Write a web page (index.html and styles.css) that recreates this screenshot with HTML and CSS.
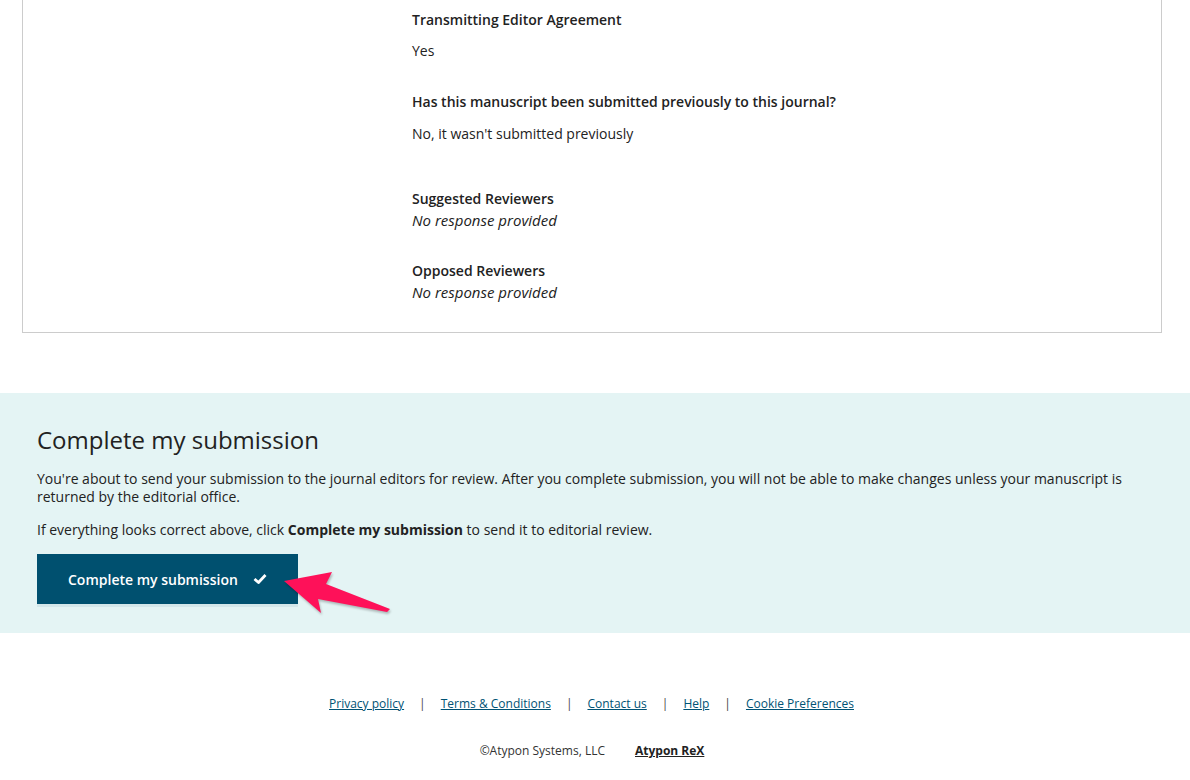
FILE: index.html
```html
<html lang="en">
<head>
    <meta charset="UTF-8">
    <meta name="viewport" content="width=device-width, initial-scale=1.0">
    <title>Review submission</title>
    <link rel="stylesheet" href="styles.css">
</head>
<body>
    <div class="review-card">
        <div class="side"></div>
        <div class="fields">
            <div class="field">
                <div class="label">Transmitting Editor Agreement</div>
                <div class="value">Yes</div>
            </div>
            <div class="field">
                <div class="label">Has this manuscript been submitted previously to this journal?</div>
                <div class="value">No, it wasn't submitted previously</div>
            </div>
            <div class="field tight">
                <div class="label">Suggested Reviewers</div>
                <div class="value empty">No response provided</div>
            </div>
            <div class="field tight">
                <div class="label">Opposed Reviewers</div>
                <div class="value empty">No response provided</div>
            </div>
        </div>
    </div>

    <div class="complete-band">
        <h2 class="complete-title">Complete my submission</h2>
        <p class="complete-text">You're about to send your submission to the journal editors for review. After you complete submission, you will not be able to make changes unless your manuscript is returned by the editorial office.</p>
        <p class="complete-text">If everything looks correct above, click <strong>Complete my submission</strong> to send it to editorial review.</p>
        <div class="button-wrap">
            <button class="complete-btn">
                Complete my submission
                <svg class="check" width="14" height="12" viewBox="0 0 14 12">
                    <path d="M1.5 6 L5.5 9.5 L12.5 2" fill="none" stroke="#fff" stroke-width="2.8" stroke-linejoin="round"/>
                </svg>
            </button>
            <svg class="pointer" width="110" height="46" viewBox="0 0 110 46">
                <polygon points="1,19 49,10 43,22 107,47 104,50 35,37 38,51" transform="translate(0,-4)" fill="#fe1159"/>
            </svg>
        </div>
    </div>

    <footer class="footer">
        <nav class="footer-links">
            <a href="#">Privacy policy</a>
            <span class="sep">|</span>
            <a href="#">Terms &amp; Conditions</a>
            <span class="sep">|</span>
            <a href="#">Contact us</a>
            <span class="sep">|</span>
            <a href="#">Help</a>
            <span class="sep">|</span>
            <a href="#">Cookie Preferences</a>
        </nav>
        <div class="copyright">
            <span>&copy;Atypon Systems, LLC</span>
            <a href="#" class="brand">Atypon ReX</a>
        </div>
    </footer>
</body>
</html>
```

FILE: styles.css
```css
body {
    margin: 0;
    font-family: "Open Sans", Arial, sans-serif;
    color: #222222;
    background-color: #ffffff;
}
.review-card {
    display: grid;
    grid-template-columns: 389px 1fr;
    margin-left: 22px;
    width: 1138px;
    border: 1px solid #cccccc;
    border-top: none;
    padding-bottom: 30px;
}
.fields {
    padding-top: 10px;
}
.field {
    margin-bottom: 31px;
}
.field:nth-child(2) {
    margin-bottom: 45px;
}
.field:last-child {
    margin-bottom: 0;
}
.label {
    font-size: 14px;
    font-weight: 600;
    line-height: 20px;
    margin-bottom: 11px;
}
.field:nth-child(2) .label {
    margin-bottom: 12px;
}
.value {
    font-size: 14px;
    line-height: 20px;
}
.field.tight .label {
    margin-bottom: 1px;
}
.value.empty {
    font-style: italic;
    font-size: 15px;
}
.complete-band {
    margin-top: 60px;
    background-color: #e4f4f4;
    padding: 31px 37px 26px;
}
.complete-title {
    margin: 0 0 14px;
    font-size: 24px;
    font-weight: 400;
    line-height: 32px;
}
.complete-text {
    margin: 0 0 15px;
    font-size: 14px;
    line-height: 18px;
}
.complete-text strong {
    font-weight: 700;
}
.button-wrap {
    position: relative;
    height: 53px;
}
.complete-btn {
    display: flex;
    align-items: center;
    gap: 15px;
    height: 50px;
    width: 261px;
    padding: 0 0 0 31px;
    border: none;
    background-color: #00506f;
    color: #ffffff;
    font-family: "Open Sans", Arial, sans-serif;
    font-size: 14px;
    font-weight: 600;
    box-shadow: 0 3px 0 #d3e7ea;
    cursor: pointer;
}
.check {
    margin-top: -1px;
}
.pointer {
    position: absolute;
    left: 246px;
    top: 12px;
    filter: drop-shadow(1px 2px 1px rgba(0, 0, 0, 0.25));
    overflow: visible;
}
.footer {
    padding-top: 62px;
    text-align: center;
    font-size: 12px;
}
.footer-links {
    display: flex;
    justify-content: center;
    gap: 15px;
    line-height: 18px;
    padding-right: 7px;
}
.footer-links a {
    color: #005274;
}
.sep {
    color: #444444;
}
.copyright {
    margin-top: 29px;
    display: flex;
    justify-content: center;
    gap: 30px;
    line-height: 18px;
    color: #333333;
    padding-right: 6px;
}
.brand {
    color: #222222;
    font-weight: 700;
}
```
